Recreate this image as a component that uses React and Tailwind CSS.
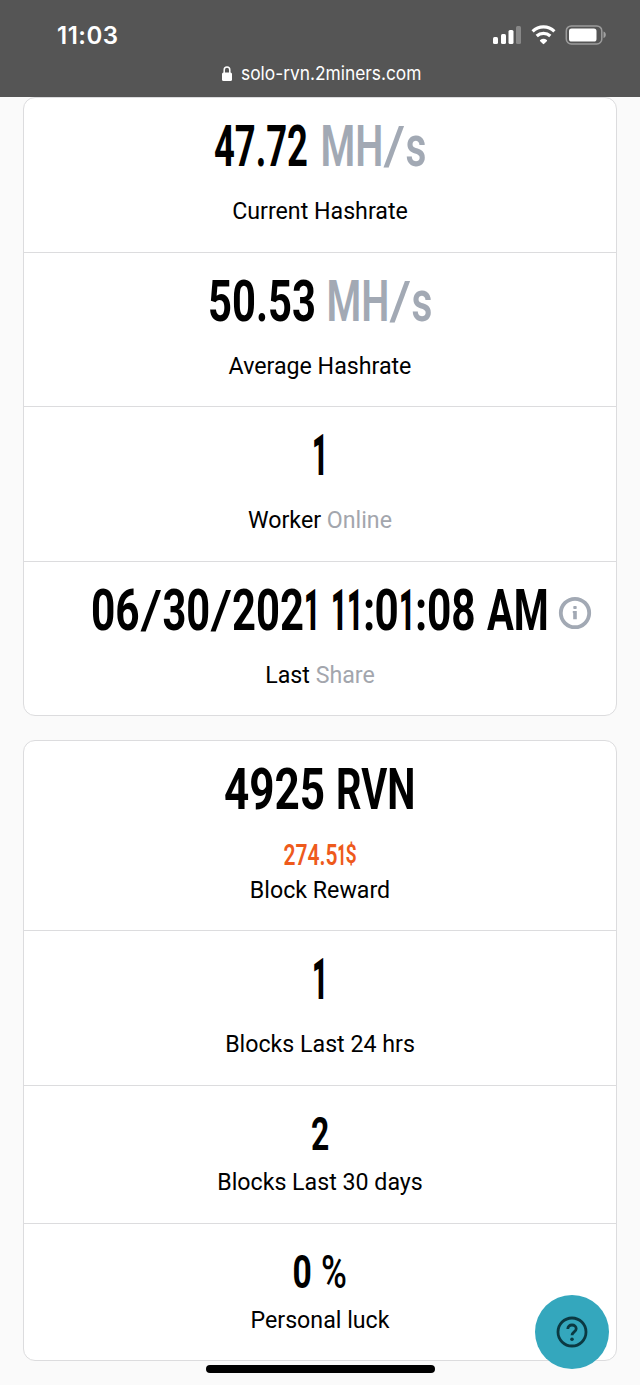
import { useLayoutEffect, useRef, useState } from "react";

// A run of condensed display type, squeezed horizontally to the given width.
function Run({ children, width, className = "" }) {
  const ref = useRef(null);
  const [scale, setScale] = useState(0.73);
  useLayoutEffect(() => {
    if (ref.current) setScale(width / ref.current.offsetWidth);
  }, [width]);
  return (
    <span className="flex shrink-0 justify-center" style={{ width }}>
      <span
        ref={ref}
        className={`shrink-0 whitespace-pre ${className}`}
        style={{ transform: `scaleX(${scale})` }}
      >
        {children}
      </span>
    </span>
  );
}

function Slash() {
  return (
    <Run width={22} className="text-[53px] font-medium">/</Run>
  );
}

function One({ width = 16 }) {
  return <Run width={width} className="font-black">1</Run>;
}

function HashUnit() {
  return (
    <span className="flex font-semibold text-[#a2a9b4]">
      <Run width={63}>MH</Run>
      <Slash />
      <Run width={21}>s</Run>
    </span>
  );
}

function Row({ height, top = "pt-[18px]", last, children }) {
  return (
    <div
      className={`flex flex-col items-center ${top} ${height} ${last ? "" : "border-b border-[#dcdcde]"}`}
    >
      {children}
    </div>
  );
}

function Big({ children }) {
  return (
    <div className="flex h-[60px] items-center justify-center text-[58px] leading-[60px] font-bold">
      {children}
    </div>
  );
}

function Small({ children }) {
  return (
    <div className="flex h-[48px] items-center justify-center text-[46px] leading-[48px] font-bold">
      {children}
    </div>
  );
}

function Label({ children, className = "mt-5" }) {
  return (
    <div className={`h-[30px] text-[23.2px] leading-[30px] whitespace-pre ${className}`}>
      {children}
    </div>
  );
}

function Header() {
  return (
    <header className="flex h-[97px] flex-col bg-[#555555] text-white">
      <div className="flex h-[58px] items-center justify-between pt-[13px] pr-[33px] pl-[57px]">
        <span className="font-['Inter',sans-serif] text-[24px] leading-none font-semibold tracking-[0.5px]">
          11:03
        </span>
        <svg width="116" height="24" viewBox="0 0 116 24" className="-mt-px">
          <g fill="#fff">
            <rect x="2" y="14" width="5" height="7" rx="1.5" />
            <rect x="10" y="11" width="5" height="10" rx="1.5" />
            <rect x="17.5" y="7" width="5" height="14" rx="1.5" />
            <rect x="25" y="3" width="5" height="18" rx="1.5" opacity=".3" />
            <path d="M51.800 20.800a1 1 0 0 0 1.400 0l2.600-2.600a.7.7 0 0 0 0-1.100 5.200 5.200 0 0 0-6.600 0 .7.7 0 0 0 0 1.100z" />
            <rect x="78" y="5.500" width="27.500" height="13" rx="2.600" />
            <path d="M112.500 8.500v6.500c1.700-.6 2.300-1.900 2.300-3.250s-.6-2.600-2.300-3.250z" opacity=".45" />
          </g>
          <path d="M41.600 8.500a15.800 15.800 0 0 1 21.800 0M45.700 13.200a10 10 0 0 1 13.600 0" transform="translate(0 -.2)" fill="none" stroke="#fff" strokeWidth="3.200" />
          <rect x="75.300" y="2.900" width="35.500" height="18" rx="5" fill="none" stroke="#fff" strokeOpacity=".42" strokeWidth="1.500" />
        </svg>
      </div>
      <div className="flex h-[30px] items-center justify-center pl-[3px] font-['Inter',sans-serif] text-[18.500px] leading-[28px]">
        <svg width="10" height="15" viewBox="0 0 10 15" className="mr-[9px]">
          <rect y="6.500" width="10" height="8.500" rx="1.500" fill="#fff" />
          <path d="M2.200 7V4a2.800 2.900 0 0 1 5.600 0v3" fill="none" stroke="#fff" strokeWidth="1.500" />
        </svg>
        <Run width={180}>solo-rvn.2miners.com</Run>
      </div>
    </header>
  );
}

export default function App() {
  return (
    <div className="relative h-[1385px] w-[640px] overflow-hidden bg-[#fafafa] font-['Roboto',sans-serif] text-black">
      <Header />
      <main className="flex flex-col gap-6 px-[23px]">
        <section className="h-[619px] rounded-xl border border-[#dcdcde] bg-white">
          <Row height="h-[155px]">
            <Big>
              <Run width={94}>47.72</Run>
              <Run width={12}> </Run>
              <HashUnit />
            </Big>
            <Label>Current Hashrate</Label>
          </Row>
          <Row height="h-[154px]">
            <Big>
              <Run width={108}>50.53</Run>
              <Run width={11}> </Run>
              <HashUnit />
            </Big>
            <Label>Average Hashrate</Label>
          </Row>
          <Row height="h-[155px]">
            <Big>
              <One />
            </Big>
            <Label>
              Worker <span className="text-[#a3a6ad]">Online</span>
            </Label>
          </Row>
          <Row height="h-[153px]" last>
            <Big>
              <Run width={49}>06</Run>
              <Slash />
              <Run width={48}>30</Run>
              <Slash />
              <Run width={72}>202</Run>
              <One />
              <Run width={11}> </Run>
              <One />
              <One />
              <Run width={12}>:</Run>
              <Run width={24}>0</Run>
              <One />
              <Run width={12}>:</Run>
              <Run width={49}>08</Run>
              <Run width={11}> </Run>
              <Run width={62}>AM</Run>
              <svg width="34" height="34" viewBox="0 0 34 34" className="mt-[5px] -mr-[43px] ml-[9px] shrink-0" fill="#a2a9b4">
                <circle cx="17" cy="17" r="14.200" fill="none" stroke="#a2a9b4" strokeWidth="3.800" />
                <rect x="15.300" y="10" width="3.400" height="3" rx=".8" />
                <path d="M14.800 14.900h4v8.300h-3.600v-6.300h-.4z" />
              </svg>
            </Big>
            <Label>
              Last <span className="text-[#a3a6ad]">Share</span>
            </Label>
          </Row>
        </section>

        <section className="h-[621px] rounded-xl border border-[#dcdcde] bg-white">
          <Row height="h-[190px]">
            <Big>
              <Run width={101}>4925</Run>
              <Run width={11}> </Run>
              <Run width={79}>RVN</Run>
            </Big>
            <div className="mt-[20px] flex h-[32px] items-center text-[30px] leading-[32px] font-semibold text-[#ee5a1c]">
              <Run width={54}>274.5</Run>
              <Run width={8} className="font-black">1</Run>
              <Run width={11} className="text-[25px]">$</Run>
            </div>
            <Label className="mt-1">Block Reward</Label>
          </Row>
          <Row height="h-[155px]">
            <Big>
              <One />
            </Big>
            <Label>Blocks Last 24 hrs</Label>
          </Row>
          <Row height="h-[138px]" top="pt-[24px]">
            <Small>
              <Run width={18}>2</Run>
            </Small>
            <Label className="mt-[9px]">Blocks Last 30 days</Label>
          </Row>
          <Row height="h-[136px]" top="pt-[24px]" last>
            <Small>
              <Run width={19}>0</Run>
              <Run width={9}> </Run>
              <Run width={26} className="font-medium">%</Run>
            </Small>
            <Label className="mt-[9px]">Personal luck</Label>
          </Row>
        </section>
      </main>

      <button aria-label="Help" className="absolute top-[1295px] left-[535px] flex size-[74px] items-center justify-center rounded-full bg-[#34a7bd]">
        <svg width="32" height="32" viewBox="0 0 32 32" fill="none" stroke="#0b3942">
          <circle cx="16" cy="16" r="14" strokeWidth="2.800" />
          <path d="M11.800 13c0-2.400 1.800-4 4.200-4s4.200 1.600 4.200 3.800c0 3-4.200 3.300-4.200 6.500" strokeWidth="2.800" />
          <circle cx="16" cy="23.200" r="1.800" fill="#0b3942" stroke="none" />
        </svg>
      </button>
      <div className="absolute top-[1365px] left-[206px] h-2 w-[229px] rounded-full bg-black" />
    </div>
  );
}
